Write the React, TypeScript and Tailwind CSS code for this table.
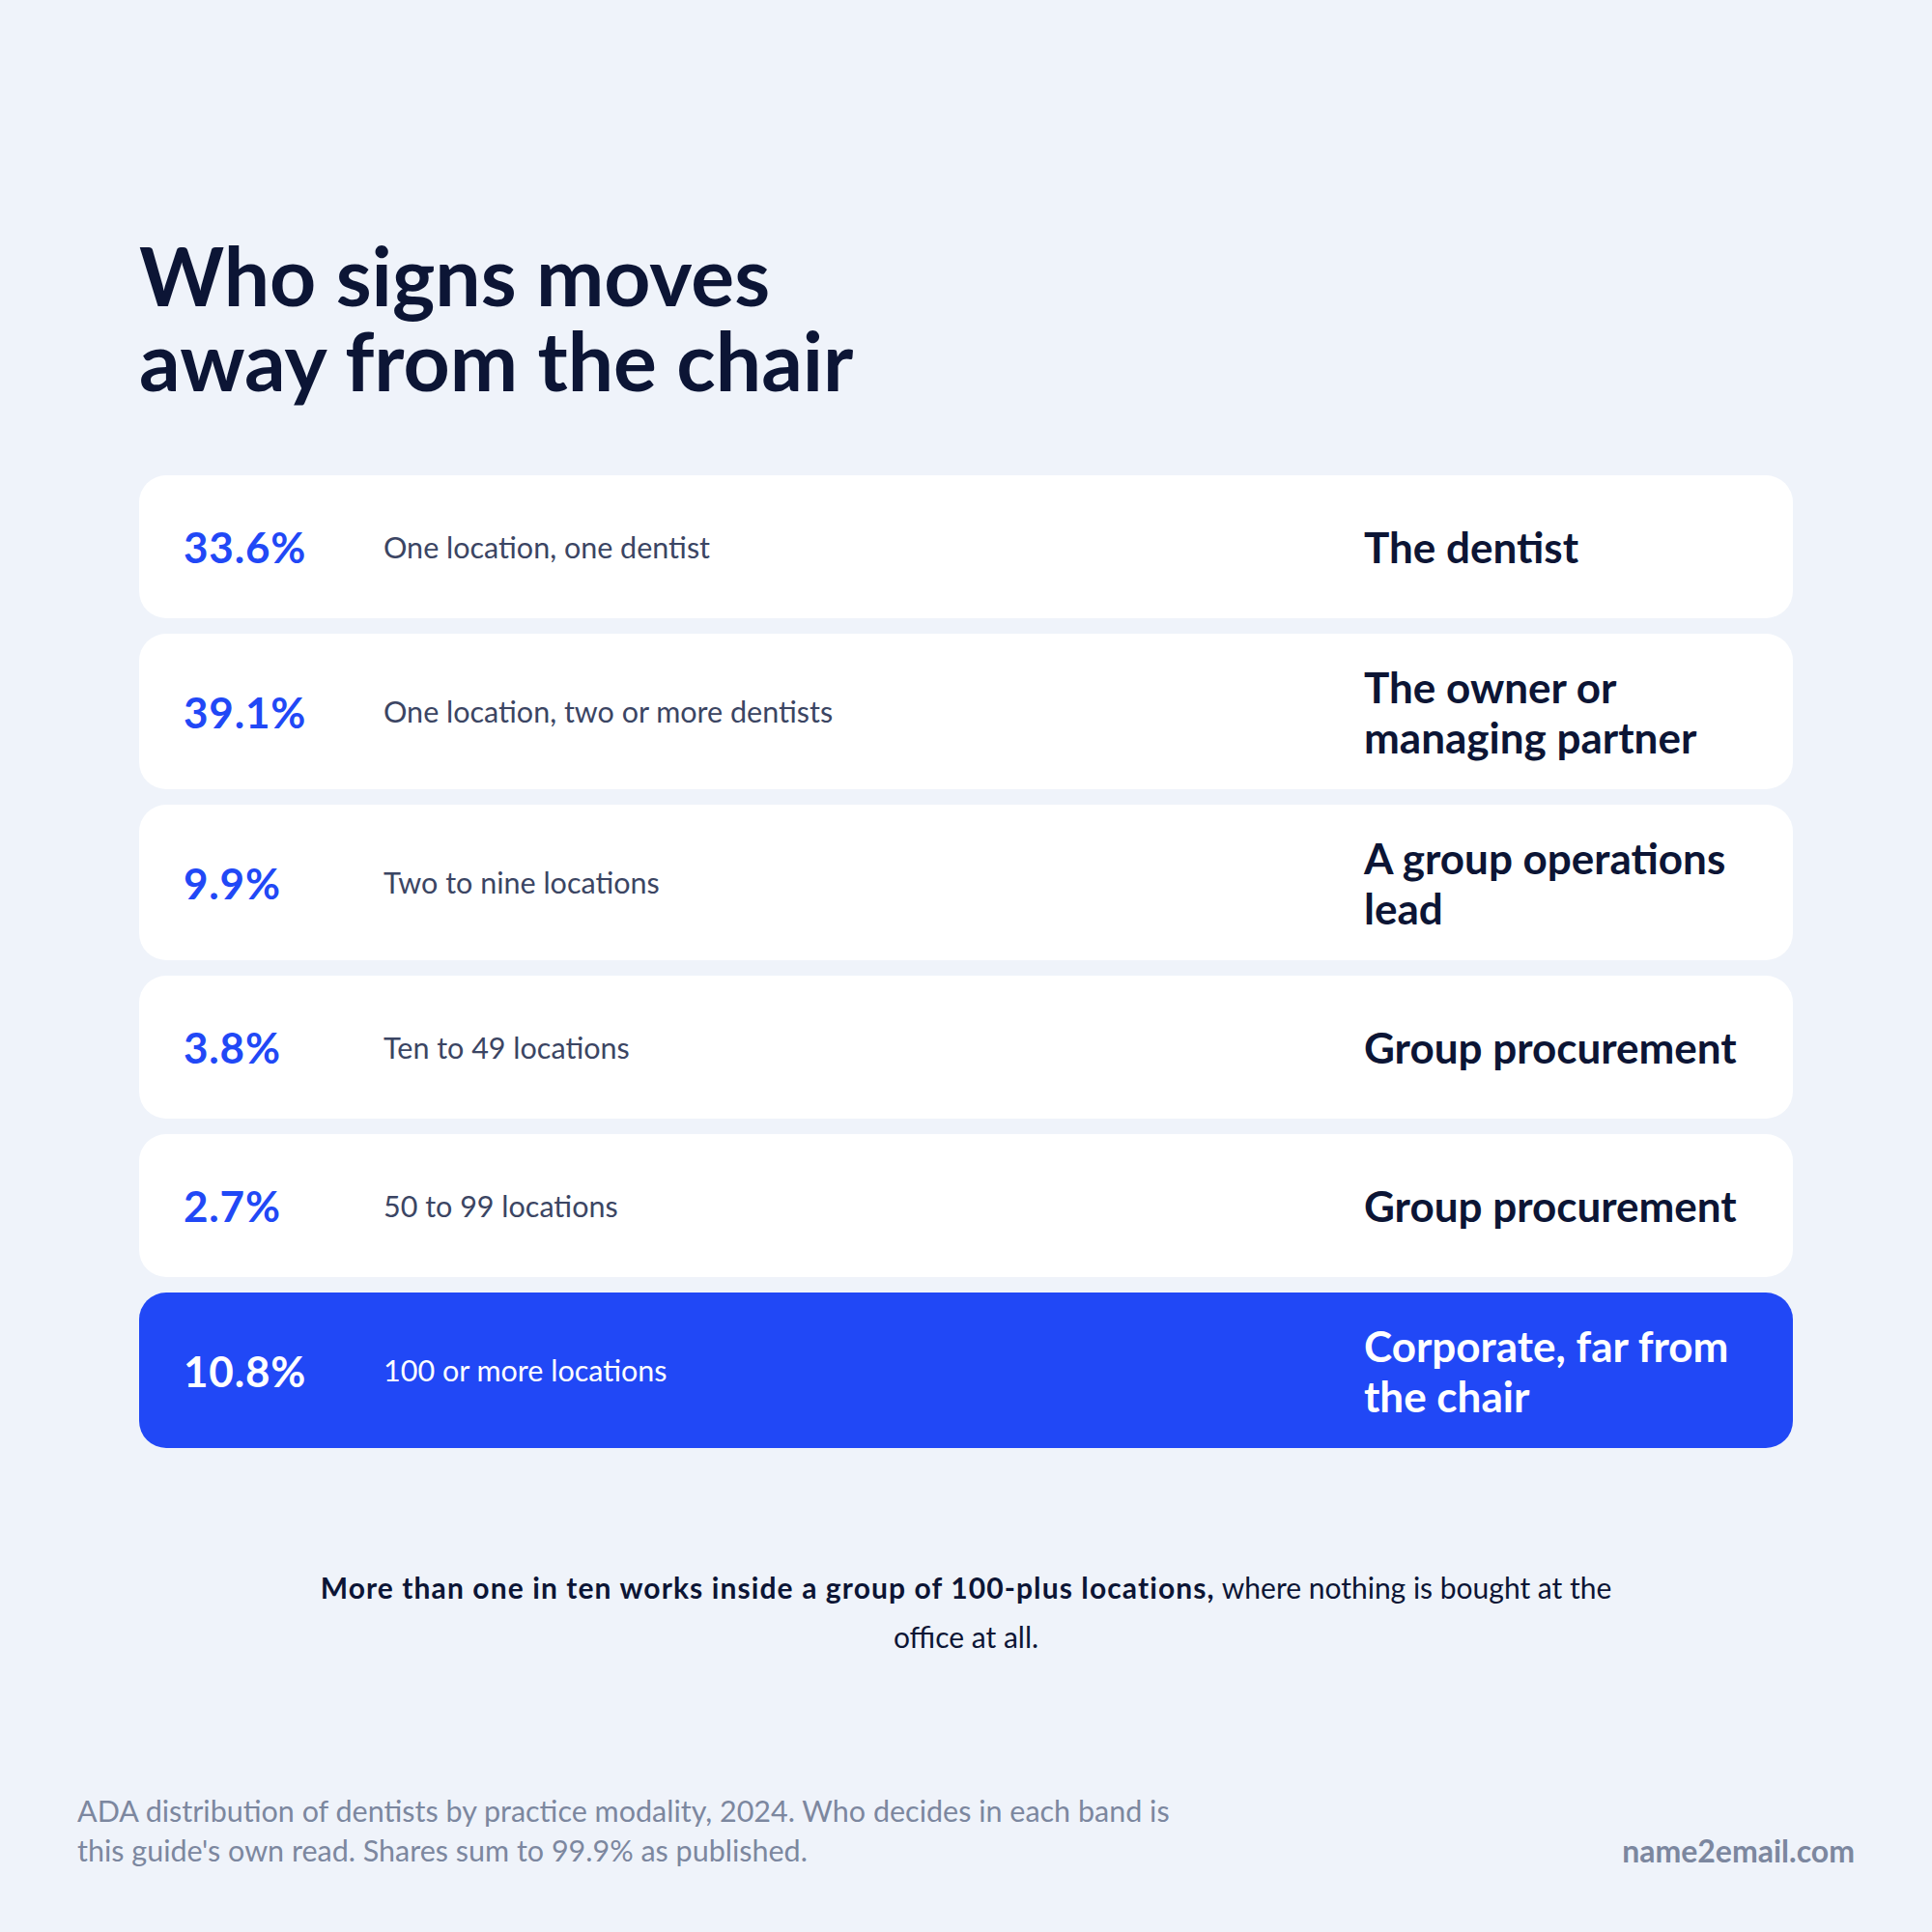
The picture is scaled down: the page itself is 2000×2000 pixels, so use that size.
import { FC, ReactNode } from "react";

// One row of the table
interface Band {
  share: string;
  label: string;
  who: ReactNode;
  twoLine?: boolean;
  highlight?: boolean;
}

const bands: Band[] = [
  { share: "33.6%", label: "One location, one dentist", who: "The dentist" },
  {
    share: "39.1%",
    label: "One location, two or more dentists",
    who: (
      <>
        The owner or
        <br />
        managing partner
      </>
    ),
    twoLine: true,
  },
  {
    share: "9.9%",
    label: "Two to nine locations",
    who: (
      <>
        A group operations
        <br />
        lead
      </>
    ),
    twoLine: true,
  },
  { share: "3.8%", label: "Ten to 49 locations", who: "Group procurement" },
  { share: "2.7%", label: "50 to 99 locations", who: "Group procurement" },
  {
    share: "10.8%",
    label: "100 or more locations",
    who: (
      <>
        Corporate, far from
        <br />
        the chair
      </>
    ),
    twoLine: true,
    highlight: true,
  },
];

const BandRow: FC<{ band: Band }> = ({ band }) => {
  const hl = band.highlight;
  return (
    <div
      className={`grid grid-cols-[207px_1fr_398px] items-center rounded-[28px] pl-[46px] pr-[46px] ${
        band.twoLine ? "py-[28.5px]" : "min-h-[148px]"
      } ${hl ? "bg-[#2148f6]" : "bg-white"}`}
    >
      <span
        className={`text-[44px] font-bold leading-none tracking-[0.8px] ${
          hl ? "text-white" : "text-[#2148f6]"
        }`}
      >
        {band.share}
      </span>
      <span className={`text-[30.5px] leading-none ${hl ? "text-white" : "text-[#3b4563]"}`}>
        {band.label}
      </span>
      <span
        className={`text-[44px] font-bold leading-[52px] ${hl ? "text-white" : "text-[#0c1535]"}`}
      >
        {band.who}
      </span>
    </div>
  );
};

const App: FC = () => {
  return (
    <div
      className="flex h-[2000px] w-[2000px] flex-col bg-[#eff3fa]"
      style={{ fontFamily: "Lato, 'Open Sans', sans-serif" }}
    >
      {/* Heading + table */}
      <main className="flex flex-col px-[144px] pt-[241px]">
        <h1 className="text-[84px] font-bold leading-[88px] text-[#0c1535]">
          Who signs moves
          <br />
          away from the chair
        </h1>

        <div className="mt-[75px] flex flex-col gap-4">
          {bands.map((band) => (
            <BandRow key={band.share} band={band} />
          ))}
        </div>

        <p className="mx-auto mt-[119px] text-center text-[30px] leading-[51px] text-[#0c1535]">
          <span className="font-bold tracking-[1.1px]">
            More than one in ten works inside a group of 100-plus locations,
          </span>{" "}
          where nothing is bought at the
          <br />
          office at all.
        </p>
      </main>

      {/* Footer */}
      <footer className="mt-auto flex items-end justify-between px-[80px] pb-[64px]">
        <p className="text-[30.5px] leading-[41px] text-[#7c879f]">
          ADA distribution of dentists by practice modality, 2024. Who decides in each band is
          <br />
          this guide's own read. Shares sum to 99.9% as published.
        </p>
        <span className="text-[32px] font-bold leading-[41px] text-[#7c879f]">
          name2email.com
        </span>
      </footer>
    </div>
  );
};

export default App;
